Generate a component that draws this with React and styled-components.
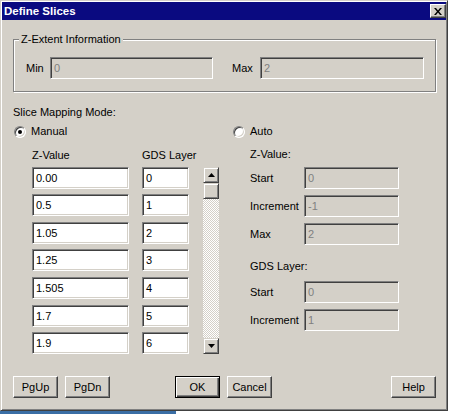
import styled, { createGlobalStyle } from 'styled-components';

const GlobalStyle = createGlobalStyle`
  html, body {
    margin: 0;
    padding: 0;
    background: #ffffff;
  }
  body {
    font-family: "Liberation Sans", Arial, sans-serif;
    font-size: 11px;
    color: #000;
  }
`;

const zValues = ['0.00', '0.5', '1.05', '1.25', '1.505', '1.7', '1.9'];
const layers = ['0', '1', '2', '3', '4', '5', '6'];

const Arrow = ({ down }) => (
  <svg width='7' height='4' viewBox='0 0 7 4'>
    {down ? <polygon points='0,0 7,0 3.5,4' fill='#000' /> : <polygon points='0,4 7,4 3.5,0' fill='#000' />}
  </svg>
);

const App = () => {
  return (
    <>
      <GlobalStyle />
      <Window>
        <TitleBar>
          <Title>Define Slices</Title>
          <CloseButton>
            <svg width='8' height='7' viewBox='0 0 8 7'>
              <path d='M0 0h2l2 2.5L6 0h2L5 3.5 8 7H6L4 4.5 2 7H0l3-3.5z' fill='#000' />
            </svg>
          </CloseButton>
        </TitleBar>
        <Body>
          <Group>
            <GroupLabel>Z-Extent Information</GroupLabel>
            <ExtentRow>
              <FieldLabel $width={24}>Min</FieldLabel>
              <TextBox $width={163} $disabled>0</TextBox>
              <FieldLabel $width={28} $gap={19}>Max</FieldLabel>
              <TextBox $width={164} $disabled>2</TextBox>
            </ExtentRow>
          </Group>

          <SectionLabel>Slice Mapping Mode:</SectionLabel>

          <Modes>
            <ModeColumn>
              <RadioRow $indent={1}>
                <Radio $checked />
                <span>Manual</span>
              </RadioRow>
              <Headers>
                <span>Z-Value</span>
                <span>GDS Layer</span>
              </Headers>
              <SliceGrid>
                {zValues.map((z, i) => (
                  <SliceRow key={z}>
                    <TextBox $width={97}>{z}</TextBox>
                    <TextBox $width={47}>{layers[i]}</TextBox>
                  </SliceRow>
                ))}
                <ScrollBar>
                  <ScrollButton>
                    <Arrow />
                  </ScrollButton>
                  <Thumb />
                  <Track />
                  <ScrollButton>
                    <Arrow down />
                  </ScrollButton>
                </ScrollBar>
              </SliceGrid>
            </ModeColumn>

            <ModeColumn>
              <RadioRow>
                <Radio />
                <span>Auto</span>
              </RadioRow>
              <SubHeading $top={10}>Z-Value:</SubHeading>
              <AutoGrid $top={5.5}>
                <span>Start</span>
                <TextBox $width={95} $disabled>0</TextBox>
                <span>Increment</span>
                <TextBox $width={95} $disabled>-1</TextBox>
                <span>Max</span>
                <TextBox $width={95} $disabled>2</TextBox>
              </AutoGrid>
              <SubHeading $top={15.5}>GDS Layer:</SubHeading>
              <AutoGrid $top={7.5}>
                <span>Start</span>
                <TextBox $width={95} $disabled>0</TextBox>
                <span>Increment</span>
                <TextBox $width={95} $disabled>1</TextBox>
              </AutoGrid>
            </ModeColumn>
          </Modes>

          <ButtonRow>
            <Button>PgUp</Button>
            <Button $gap={7}>PgDn</Button>
            <Button $gap={65} $default>OK</Button>
            <Button $gap={7}>Cancel</Button>
            <Button $gap={119}>Help</Button>
          </ButtonRow>
        </Body>
      </Window>
      <TaskStrip />
    </>
  );
};

const Window = styled.div`
  box-sizing: border-box;
  width: 448px;
  height: 411px;
  padding: 1px;
  background: #d4d0c8;
  border: 1px solid;
  border-color: #d4d0c8 #404040 #404040 #d4d0c8;
  box-shadow: inset 1px 1px 0 #ffffff, inset -1px -1px 0 #808080;
  display: flex;
  flex-direction: column;
`;

const TitleBar = styled.div`
  height: 18px;
  background: #0a0a80;
  display: flex;
  align-items: center;
  justify-content: space-between;
  padding-left: 2px;
`;

const Title = styled.div`
  color: #fff;
  font-weight: bold;
  font-size: 11.5px;
`;

const CloseButton = styled.div`
  box-sizing: border-box;
  width: 16px;
  height: 14px;
  background: #d4d0c8;
  border: 1px solid;
  border-color: #ffffff #404040 #404040 #ffffff;
  box-shadow: inset -1px -1px 0 #808080;
  display: flex;
  align-items: center;
  justify-content: center;
`;

const Body = styled.div`
  padding: 0 8px 0 11px;
  display: flex;
  flex-direction: column;
`;

const Group = styled.div`
  box-sizing: border-box;
  margin-top: 19px;
  width: 423px;
  height: 53px;
  border: 1px solid #808080;
  box-shadow: inset 1px 1px 0 #ffffff, 1px 1px 0 #ffffff;
`;

const GroupLabel = styled.div`
  width: fit-content;
  margin: -7px 0 0 5px;
  padding: 0 2px;
  line-height: 13px;
  background: #d4d0c8;
`;

const ExtentRow = styled.div`
  display: flex;
  align-items: center;
  margin-top: 11px;
  padding-left: 12px;
`;

const FieldLabel = styled.span`
  width: ${({ $width }) => $width}px;
  margin-left: ${({ $gap }) => $gap || 0}px;
`;

const TextBox = styled.div`
  box-sizing: border-box;
  width: ${({ $width }) => $width}px;
  height: 22px;
  padding: 0 3px;
  display: flex;
  align-items: center;
  background: ${({ $disabled }) => ($disabled ? '#d4d0c8' : '#ffffff')};
  color: ${({ $disabled }) => ($disabled ? '#808080' : '#000000')};
  border: 1px solid;
  border-color: #808080 #ffffff #ffffff #808080;
  box-shadow: inset 1px 1px 0 #404040, inset -1px -1px 0 #d4d0c8;
`;

const SectionLabel = styled.div`
  margin-top: 14px;
  line-height: 13px;
`;

const Modes = styled.div`
  display: grid;
  grid-template-columns: 220px 1fr;
`;

const ModeColumn = styled.div`
  display: flex;
  flex-direction: column;
`;

const RadioRow = styled.div`
  margin-top: 6px;
  padding-left: ${({ $indent }) => $indent || 0}px;
  display: flex;
  align-items: center;
  gap: 5px;
  line-height: 13px;
`;

const Radio = styled.span`
  box-sizing: border-box;
  width: 12px;
  height: 12px;
  border-radius: 50%;
  border: 1px solid;
  border-color: #808080 #ffffff #ffffff #808080;
  box-shadow: inset 1px 1px 0 #404040, inset -1px -1px 0 #d4d0c8;
  background: #ffffff;
  display: flex;
  align-items: center;
  justify-content: center;

  &::after {
    content: '';
    width: 4px;
    height: 4px;
    border-radius: 50%;
    background: ${({ $checked }) => ($checked ? '#000' : 'transparent')};
  }
`;

const Headers = styled.div`
  display: grid;
  grid-template-columns: 110px auto;
  margin-top: 11px;
  padding-left: 19px;
  line-height: 13px;
`;

const SliceGrid = styled.div`
  display: grid;
  grid-template-columns: 157px 16px;
  grid-template-rows: repeat(7, 22px);
  column-gap: 14px;
  row-gap: 5.67px;
  margin-top: 4.5px;
  padding-left: 19px;
`;

const SliceRow = styled.div`
  grid-column: 1;
  display: flex;
  gap: 13px;
`;

const ScrollBar = styled.div`
  grid-column: 2;
  grid-row: 1 / span 7;
  display: flex;
  flex-direction: column;
`;

const ScrollButton = styled.div`
  box-sizing: border-box;
  height: 16px;
  background: #d4d0c8;
  border: 1px solid;
  border-color: #d4d0c8 #404040 #404040 #d4d0c8;
  box-shadow: inset 1px 1px 0 #ffffff, inset -1px -1px 0 #808080;
  display: flex;
  align-items: center;
  justify-content: center;
`;

const Thumb = styled(ScrollButton)``;

const Track = styled.div`
  flex: 1;
  background: repeating-conic-gradient(#ffffff 0 25%, #d4d0c8 0 50%) 0 0 / 2px 2px;
`;

const SubHeading = styled.div`
  margin-top: ${({ $top }) => $top}px;
  padding-left: 17px;
  line-height: 13px;
`;

const AutoGrid = styled.div`
  display: grid;
  grid-template-columns: 54px 95px;
  grid-auto-rows: 22px;
  row-gap: 6px;
  align-items: center;
  margin-top: ${({ $top }) => $top}px;
  padding-left: 17px;
`;

const ButtonRow = styled.div`
  display: flex;
  margin-top: 22px;
`;

const Button = styled.div`
  box-sizing: border-box;
  width: 45px;
  height: 22px;
  margin-left: ${({ $gap }) => $gap || 0}px;
  display: flex;
  align-items: center;
  justify-content: center;
  background: #d4d0c8;
  border: 1px solid;
  border-color: ${({ $default }) => ($default ? '#000000' : '#ffffff #404040 #404040 #ffffff')};
  box-shadow: ${({ $default }) =>
    $default
      ? 'inset 1px 1px 0 #ffffff, inset -1px -1px 0 #404040, inset -2px -2px 0 #808080'
      : 'inset -1px -1px 0 #808080'};
`;

const TaskStrip = styled.div`
  width: 176px;
  height: 3px;
  background: #3a6ea5;
`;

export default App;
